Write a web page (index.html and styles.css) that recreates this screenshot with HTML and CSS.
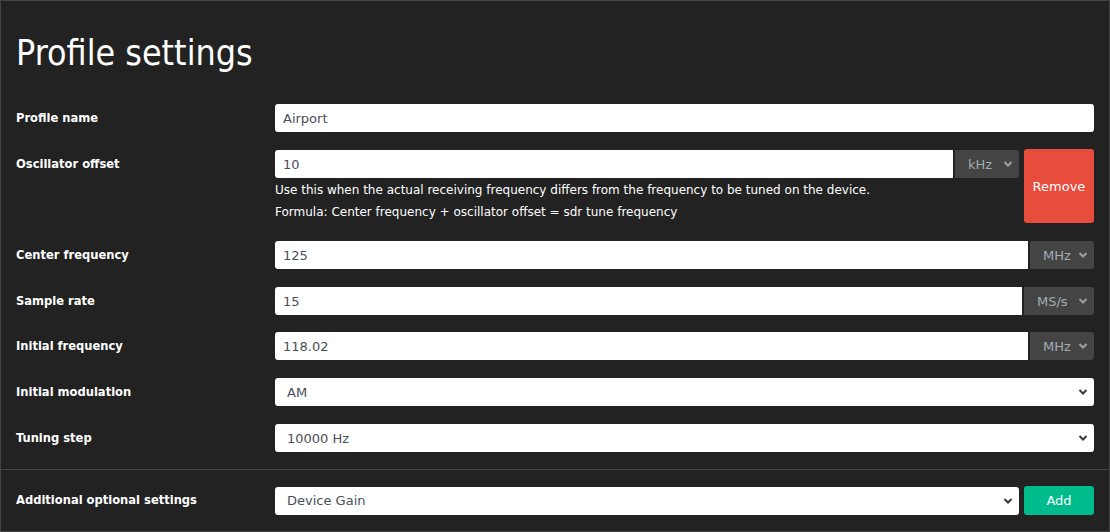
FILE: index.html
```html
<!DOCTYPE html>
<html lang="en">
<head>
<meta charset="utf-8">
<title>Profile settings</title>
<link rel="stylesheet" href="styles.css">
</head>
<body>
<div class="panel">
  <h1 class="title">Profile settings</h1>
  <div class="rows">
    <div class="row">
      <label class="label">Profile name</label>
      <input class="field" type="text" value="Airport">
    </div>
    <div class="row row-osc">
      <label class="label">Oscillator offset</label>
      <div class="osc">
        <div class="osc-main">
          <div class="group">
            <input class="field field-left" type="text" value="10">
            <div class="unit">
              <select class="unit-select"><option>kHz</option></select>
              <svg class="chev" width="10" height="8" viewBox="0 0 10 8"><path d="M1.5 2 L5 5.5 L8.5 2" fill="none" stroke="#9aa0a6" stroke-width="2"/></svg>
            </div>
          </div>
          <p class="help">Use this when the actual receiving frequency differs from the frequency to be tuned on the device.</p>
          <p class="help">Formula: Center frequency + oscillator offset = sdr tune frequency</p>
        </div>
        <button class="btn btn-remove">Remove</button>
      </div>
    </div>
    <div class="row">
      <label class="label">Center frequency</label>
      <div class="group">
        <input class="field field-left" type="text" value="125">
        <div class="unit">
          <select class="unit-select"><option>MHz</option></select>
          <svg class="chev" width="10" height="8" viewBox="0 0 10 8"><path d="M1.5 2 L5 5.5 L8.5 2" fill="none" stroke="#9aa0a6" stroke-width="2"/></svg>
        </div>
      </div>
    </div>
    <div class="row">
      <label class="label">Sample rate</label>
      <div class="group">
        <input class="field field-left" type="text" value="15">
        <div class="unit unit-wide">
          <select class="unit-select"><option>MS/s</option></select>
          <svg class="chev" width="10" height="8" viewBox="0 0 10 8"><path d="M1.5 2 L5 5.5 L8.5 2" fill="none" stroke="#9aa0a6" stroke-width="2"/></svg>
        </div>
      </div>
    </div>
    <div class="row row-tight">
      <label class="label">Initial frequency</label>
      <div class="group">
        <input class="field field-left" type="text" value="118.02">
        <div class="unit">
          <select class="unit-select"><option>MHz</option></select>
          <svg class="chev" width="10" height="8" viewBox="0 0 10 8"><path d="M1.5 2 L5 5.5 L8.5 2" fill="none" stroke="#9aa0a6" stroke-width="2"/></svg>
        </div>
      </div>
    </div>
    <div class="row">
      <label class="label">Initial modulation</label>
      <div class="sel">
        <select class="field sel-field"><option>AM</option></select>
        <svg class="chev" width="10" height="8" viewBox="0 0 10 8"><path d="M1.5 2 L5 5.5 L8.5 2" fill="none" stroke="#343a40" stroke-width="2"/></svg>
      </div>
    </div>
    <div class="row">
      <label class="label">Tuning step</label>
      <div class="sel">
        <select class="field sel-field"><option>10000 Hz</option></select>
        <svg class="chev" width="10" height="8" viewBox="0 0 10 8"><path d="M1.5 2 L5 5.5 L8.5 2" fill="none" stroke="#343a40" stroke-width="2"/></svg>
      </div>
    </div>
  </div>
  <hr class="sep">
  <div class="row">
    <label class="label">Additional optional settings</label>
    <div class="add">
      <div class="sel">
        <select class="field sel-field"><option>Device Gain</option></select>
        <svg class="chev" width="10" height="8" viewBox="0 0 10 8"><path d="M1.5 2 L5 5.5 L8.5 2" fill="none" stroke="#343a40" stroke-width="2"/></svg>
      </div>
      <button class="btn btn-add">Add</button>
    </div>
  </div>
</div>
</body>
</html>
```
FILE: styles.css
```css
* { box-sizing: border-box; }
html, body { margin: 0; padding: 0; background: #222; }
body {
  font-family: "DejaVu Sans Condensed", "DejaVu Sans", sans-serif;
  color: #fff;
  font-size: 13px;
}
.panel {
  width: 1110px;
  height: 532px;
  border: 1px solid #444;
  background: #222;
  padding: 0 15px;
  overflow: hidden;
}
.title {
  margin: 33px 0 0 0;
  font-weight: normal;
  font-size: 35.5px;
  line-height: 38px;
  height: 70px;
}
.rows {
  display: flex;
  flex-direction: column;
  gap: 18px;
}
.row {
  display: grid;
  grid-template-columns: 259px 1fr;
  align-items: start;
}
.row-osc { margin-top: -1px; }
.row-osc .label { padding-top: 1px; }
.row-tight { margin-top: -1px; }
.label {
  font-weight: bold;
  font-size: 12.8px;
  line-height: 28px;
}
.field {
  display: block;
  width: 100%;
  height: 28px;
  border: none;
  border-radius: 3px;
  background: #fff;
  color: #495057;
  font-family: "DejaVu Sans", sans-serif;
  font-size: 13px;
  padding: 0 8px;
  outline: none;
}
.group {
  display: flex;
  gap: 2px;
}
.field-left {
  flex: 1;
  border-radius: 3px 0 0 3px;
}
.unit {
  position: relative;
  width: 64px;
  flex: none;
}
.unit-wide { width: 70px; }
.unit-select {
  appearance: none;
  -webkit-appearance: none;
  width: 100%;
  height: 28px;
  border: none;
  border-radius: 0 3px 3px 0;
  background: #444;
  color: #a3abb3;
  font-family: "DejaVu Sans", sans-serif;
  font-size: 13px;
  padding: 0 0 0 13px;
  outline: none;
}
.chev {
  position: absolute;
  right: 6px;
  top: 10px;
  pointer-events: none;
}
.sel { position: relative; }
.sel-field {
  appearance: none;
  -webkit-appearance: none;
  padding-left: 12px;
}
.osc {
  display: flex;
  gap: 5px;
  align-items: stretch;
}
.osc-main { flex: 1; padding-top: 1px; }
.help {
  margin: 0;
  font-family: "DejaVu Sans", sans-serif;
  font-size: 12px;
  line-height: 22px;
  color: #fff;
}
.group + .help { margin-top: 1px; }
.btn {
  border: none;
  border-radius: 3px;
  color: #fff;
  font-family: "DejaVu Sans", sans-serif;
  font-size: 13px;
  font-weight: normal;
  width: 70px;
  flex: none;
  cursor: pointer;
}
.btn-remove {
  background: #e74c3c;
  height: 74px;
}
.btn-add {
  background: #00bc8c;
  height: 29px;
}
.sep {
  border: none;
  border-top: 1px solid #444;
  margin: 17px -15px 16px -15px;
  height: 0;
}
.add {
  display: flex;
  gap: 5px;
  align-items: center;
}
.add .sel { flex: 1; }
```
